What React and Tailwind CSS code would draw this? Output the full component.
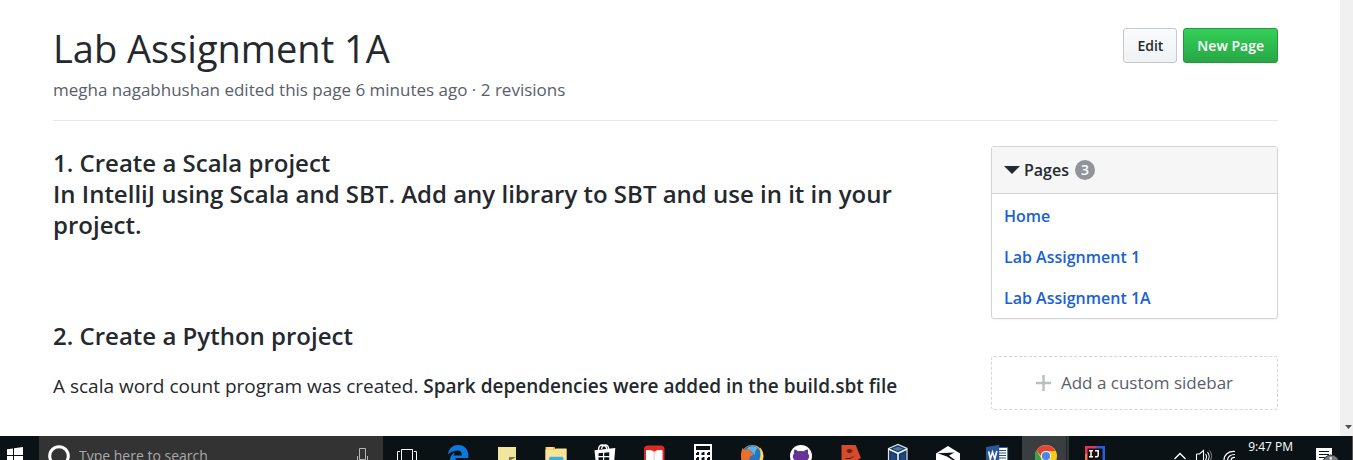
import React from "react";

const pages = ["Home", "Lab Assignment 1", "Lab Assignment 1A"];

function Glyph({ children }) {
  return (
    <svg viewBox="0 0 49 24" width="49" height="24" aria-hidden="true">
      {children}
    </svg>
  );
}

const apps = [
  {
    name: "Task View",
    art: (
      <g fill="none" stroke="#fff" strokeWidth="1">
        <path d="M18.5 26V13.5h11V26M17 15.5h-2.5V26M31 15.5h2.500V26" />
      </g>
    ),
  },
  {
    name: "Microsoft Edge",
    art: (
      <path
        fill="#0a7bdc"
        d="M16 18.500C17 12 21 9 26.300 9c6.200 0 10 4.200 10 10.500V22H23.300c.2 3 3 4 6 4H18c-.8-4 1.200-7.800 5-9.600-1 1.200-1.200 2.200-1.300 3h8.200c0-3-1.300-4.800-4.200-4.800-3.500 0-7 1.500-9.700 3.900z"
      />
    ),
  },
  {
    name: "Sticky Notes",
    art: (
      <g>
        <path fill="#f1e69c" d="M17 11h18v13H17z" />
        <path fill="#7d7750" d="M28 21h7l-5 3h-2z" />
      </g>
    ),
  },
  {
    name: "File Explorer",
    art: (
      <g>
        <path fill="#f3c13c" d="M15.500 11h9l1 2h11v11h-21z" />
        <path fill="#fae49b" d="M15.500 13.500h9.500l1-1h10.500V24h-21z" />
        <path fill="#fff6d5" d="M17 11.500h6v1h-6z" />
        <path fill="#3db1e4" d="M19 22l1-1.200h12.500l1 1.200v2H19z" />
      </g>
    ),
  },
  {
    name: "Store",
    art: (
      <g>
        <path fill="none" stroke="#fff" strokeWidth="1.300" d="M19.500 14c0-3 1.500-5 4-5s4 2 4.500 4.500M22.500 13c.5-2.700 2-4 3.800-4 2 0 3.200 1.500 3.500 4" />
        <path fill="#fff" d="M15.500 14.300L36.300 12l-1 12H16.500z" />
        <path fill="#0b1216" d="M19.500 17.200l4.500-.4V20h-4.500zM25.200 16.700l5-.5V20h-5zM19.500 21.200H24V24h-4.500zM25.200 21.200h5V24h-5z" />
      </g>
    ),
  },
  {
    name: "Reader",
    art: (
      <g>
        <rect x="16" y="9.500" width="20.500" height="20" rx="4" fill="#e02b24" />
        <path fill="#fff" d="M18 14.500c3-1 6-.5 8.200 1.500 2.300-2 5-2.500 8.300-1.500V24H18z" />
        <path stroke="#e9aaa6" strokeWidth=".8" d="M26.200 16v8" />
      </g>
    ),
  },
  {
    name: "Calculator",
    art: (
      <g>
        <path fill="#fff" d="M17 8h18v16H17z" />
        <path fill="#0b1216" d="M19 10h14v4H19z" />
        <path fill="#0b1216" d="M19 16h3v3h-3zM24.500 16h3v3h-3zM30 16h3v3h-3zM19 21h3v3h-3zM24.500 21h3v3h-3zM30 21h3v3h-3z" />
        <path stroke="#fff" strokeWidth="1" d="M19 16.500h1M24.500 16.500h1M30 16.500h1M19 21.500h1M24.500 21.500h1M30 21.500h1" />
      </g>
    ),
  },
  {
    name: "Firefox",
    art: (
      <g>
        <circle cx="26.300" cy="20" r="11" fill="#f2a92c" />
        <circle cx="25.500" cy="18.500" r="9.300" fill="#2475c4" />
        <path fill="#59b6ea" d="M21 12.500c3-3 8-3 10.500-.3-2 2-3 4.500-2.500 7.300-2-3.500-5-4-8-7z" />
        <path fill="#ffdd55" d="M34 11.500c3.500 4 4 8.500 2.800 12.500h-2.900c.9-4 .9-8 .1-12.500z" />
        <path fill="#e8702a" d="M16.500 12l2 2c1.500-.8 3-.8 4.300-.4l2.700.1c-1 1-1.300 1.800-1.200 2.500l3.500 1.500c-.4 1.500-1.700 2-3.300 2.300L23 24h-7.600c-.8-4-.4-8.500 1.100-12z" />
      </g>
    ),
  },
  {
    name: "GitHub Desktop",
    art: (
      <g>
        <circle cx="26" cy="20" r="11" fill="#fff" />
        <path fill="#663399" d="M19.300 13.500c1.500-.1 2.900.9 3.900 1.800 1.800-.4 3.800-.4 5.600 0 1-.9 2.300-1.900 3.900-1.800.6 1.500.5 3 .3 3.900 2 2.600 1 4.900-.6 6.600H19.600c-1.700-1.700-2.600-4-.6-6.600-.2-.9-.3-2.400.3-3.900z" />
      </g>
    ),
  },
  {
    name: "Face",
    art: (
      <g>
        <path fill="#d84a2b" d="M17.500 9h14.200l5.200 13-3.400 2h-16z" />
        <path fill="none" stroke="#3d2420" strokeWidth="1" d="M22.500 15c1.500-2 4.500-2 6 0-1.500 2-4.500 2-6 0zM21.500 22.500c3.500.6 6-.1 8-2" />
        <circle cx="25.500" cy="15" r="1.300" fill="#3d2420" />
      </g>
    ),
  },
  {
    name: "VirtualBox",
    art: (
      <g>
        <path fill="#173b66" stroke="#dbe5ef" strokeWidth="1.200" d="M15.500 12.500L25 8.500l9 4V26H15.500z" />
        <path fill="#4f7aa8" d="M19.500 12.700l5.500-2 5.300 2-5.300 2.300z" />
        <path fill="none" stroke="#f2f6fa" strokeWidth="1.600" d="M15.500 13l9.500 4.300 9-4.300M25 17.300V26" />
        <path fill="#1f4a80" d="M18 17l4.500 2.200V24H18zM27.500 19.200L32 17v7h-4.500z" />
      </g>
    ),
  },
  {
    name: "Inkscape",
    art: (
      <g>
        <path fill="#fff" d="M14 17.500L26 10l12 7.500V24H14z" />
        <path fill="#0b1216" d="M15.500 17.300l17-.8-5.500 3 6 4.500h-2.700l-5.300-3.500z" />
      </g>
    ),
  },
  {
    name: "Word",
    art: (
      <g>
        <path fill="#fff" stroke="#295396" strokeWidth=".8" d="M27 11.500h9.700V26H27z" />
        <path stroke="#295396" strokeWidth="1" d="M28 14.500h7M28 17h7M28 19.500h7M28 22h7" />
        <path fill="#2b579a" d="M15 11l13.200-2.300V26H15z" />
        <path fill="none" stroke="#fff" strokeWidth="1.600" d="M17.700 15.500l1.600 7.500 2.200-7 2.300 7 2-8" />
      </g>
    ),
  },
  {
    name: "Google Chrome",
    art: (
      <g>
        <path fill="#3b3e40" d="M2 0h44v24H2z" />
        <path fill="#24282a" d="M46 0h1v24h-1z" />
        <path fill="#333638" d="M47 0h2v24h-2z" />
        <circle cx="26" cy="20" r="11" fill="#fbc718" />
        <path fill="#32a350" d="M16.500 14.500L23 26h-6c-2.800-4-2.500-8.500-.5-11.500z" />
        <path fill="#e0443a" d="M16.500 14.500C20.500 8 31 7 35.500 15H26c-3 0-5 2-5.200 4.800z" />
        <circle cx="26" cy="20" r="5" fill="#fff" />
        <circle cx="26" cy="20" r="4.100" fill="#4686ee" />
      </g>
    ),
  },
  {
    name: "IntelliJ IDEA",
    art: (
      <g>
        <path fill="#275ce0" d="M16 10h20v14H16z" />
        <path fill="#ed315d" d="M16 10h12l-8 14h-4z" />
        <path fill="#f3743d" d="M16 18l4-1v7h-4z" />
        <path fill="#15100f" d="M18.500 12.500h15V24h-15z" />
        <path fill="none" stroke="#fff" strokeWidth="1.500" d="M20 14.700h4M22 14.700v6M20 20.700h4M26 14.700h3.200v4.500c0 1.500-1.500 2-3.200 1.300" />
      </g>
    ),
  },
];

function Taskbar() {
  return (
    <footer className="flex h-6 shrink-0 items-start overflow-hidden bg-[#0a1216] text-white">
      <button aria-label="Start" className="w-[39px] shrink-0">
        <svg viewBox="0 0 39 24" width="39" height="24" aria-hidden="true">
          <path fill="#fff" d="M7 13.200l6-.8V19H7zM14 12.200l9-1.200v8h-9zM7 20h6v4H7zM14 20h9v4h-9z" />
        </svg>
      </button>
      <div className="flex h-10 w-[344px] shrink-0 items-center bg-[#333333]">
        <svg viewBox="0 0 40 40" width="40" height="40" aria-hidden="true">
          <circle cx="20" cy="20" r="9.300" fill="none" stroke="#fff" strokeWidth="3" />
        </svg>
        <input
          aria-label="Type here to search"
          placeholder="Type here to search"
          className="min-w-0 flex-1 bg-transparent text-sm text-white outline-none placeholder:text-[#a9a9a9]"
        />
        <svg viewBox="0 0 40 40" width="40" height="40" aria-hidden="true">
          <path fill="none" stroke="#b5b5b5" strokeWidth="1" d="M16.500 23.500v-11h6v11zM14.500 20v6h10v-6" />
        </svg>
      </div>
      <nav aria-label="Applications" className="flex shrink-0">
        {apps.map((a) => (
          <button key={a.name} aria-label={a.name}>
            <Glyph>{a.art}</Glyph>
          </button>
        ))}
      </nav>
      <div className="ml-auto flex items-start">
        <svg viewBox="0 0 68 24" width="68" height="24" fill="none" stroke="#fff" aria-hidden="true">
          <path strokeWidth="1.400" d="M4.500 23l5.500-5.500 5.500 5.500" />
          <path strokeWidth="1.100" d="M26.500 18h3l4-3.500V26M26.500 18v6M35.500 18c1.200 1.500 1.200 4 0 6M37.500 16c2 2.500 2 6 .5 8" />
          <path strokeWidth="1" stroke="#888" d="M39.500 14.500c2.500 3 2.500 7 1 9.500" />
          <path strokeWidth="1.200" d="M54 24c0-5 4-9 11-8.500M57.500 24c.3-3 3-5.700 7.500-5.500M61 24c.3-1.500 1.500-2.700 4-2.500" />
        </svg>
        <time className="mt-[3px] ml-2.5 text-xs leading-4">9:47 PM</time>
        <svg viewBox="0 0 60 24" width="60" height="24" aria-hidden="true">
          <path fill="#fff" d="M23 12h16v12H23z" />
          <path stroke="#0a1216" strokeWidth="1.200" d="M26 15.500h10M26 18.500h10M26 21.500h7" />
          <circle cx="38" cy="27" r="8" fill="#777b7d" stroke="#333" />
          <path stroke="#fff" strokeWidth="1.200" d="M36.500 22.500l1.500-1v3" />
          <path stroke="#555" d="M59.500 0v24" />
        </svg>
      </div>
    </footer>
  );
}

export default function App() {
  return (
    <div className="flex h-screen flex-col overflow-hidden bg-white font-['Open_Sans','Noto_Sans',sans-serif] text-[#24292e]">
      <div className="flex min-h-0 flex-1">
        <div className="min-w-0 flex-1 overflow-hidden pt-7 pr-[62px] pl-[53px]">
          <header className="border-b border-[#e4e7ec] pb-4">
            <div className="flex h-10 items-start justify-between">
              <h1 className="text-[38px] leading-[40px]">Lab Assignment 1A</h1>
              <div className="flex gap-1.5 text-sm font-semibold">
                <button className="h-[35px] rounded-[3px] border border-[#c6c9cc] bg-linear-to-b from-[#fafbfc] to-[#eff3f6] px-[13px]">
                  Edit
                </button>
                <button className="h-[35px] rounded-[3px] border border-[#28963f] bg-linear-to-b from-[#34d058] to-[#28a745] px-[13px] text-white">
                  New Page
                </button>
              </div>
            </div>
            <p className="mt-2 text-[17px] leading-[28px] text-[#586069]">
              megha nagabhushan edited this page 6 minutes ago · 2 revisions
            </p>
          </header>
          <div className="mt-[25px] flex items-start gap-10">
            <main className="min-w-0 flex-1 pt-px">
              <h3 className="text-2xl leading-[31px] font-semibold">
                1. Create a Scala project
                <br />
                In IntelliJ using Scala and SBT. Add any library to SBT and use in it in your project.
              </h3>
              <h3 className="mt-20 text-2xl leading-[31px] font-semibold">2. Create a Python project</h3>
              <p className="mt-5 text-[19px] leading-[30px]">
                A scala word count program was created.{" "}
                <strong className="font-semibold">Spark dependencies were added in the build.sbt file</strong>
              </p>
            </main>
            <aside className="w-[287px] shrink-0">
              <section className="rounded-[3px] border border-[#d1d5da] shadow-xs">
                <h3 className="flex h-[47px] items-center border-b border-[#d1d5da] bg-[#f6f6f6] pl-3 text-base font-semibold">
                  <svg viewBox="0 0 16 8" width="16" height="8" aria-hidden="true">
                    <path fill="#24292e" d="M0 0h16L8 8z" />
                  </svg>
                  <span className="ml-1">Pages</span>
                  <span className="ml-1.5 flex size-5 items-center justify-center rounded-full bg-[#919599] text-sm font-semibold text-white">3</span>
                </h3>
                <ul className="flex flex-col pt-px">
                  {pages.map((p) => (
                    <li key={p} className="flex h-[41px] items-center px-3 text-base font-semibold">
                      <a href="#" className="text-[#1b61d1]">{p}</a>
                    </li>
                  ))}
                </ul>
              </section>
              <a
                href="#"
                className="mt-[37px] flex h-[54px] items-center justify-center gap-2.5 rounded-[3px] border border-dashed border-[#d4d6d9] text-[17px] text-[#586069]"
              >
                <svg viewBox="0 0 15 16" width="15" height="16" aria-hidden="true">
                  <path stroke="#bcc0c4" strokeWidth="2.500" d="M0 8h15M7.500 0v16" />
                </svg>
                Add a custom sidebar
              </a>
            </aside>
          </div>
        </div>
        <div className="flex w-[13px] shrink-0 items-end justify-end bg-[#f0f0f0] pr-px pb-[7px]">
          <svg viewBox="0 0 7 4" width="7" height="4" aria-hidden="true">
            <path fill="#505050" d="M0 0h7L3.500 4z" />
          </svg>
        </div>
      </div>
      <Taskbar />
    </div>
  );
}
